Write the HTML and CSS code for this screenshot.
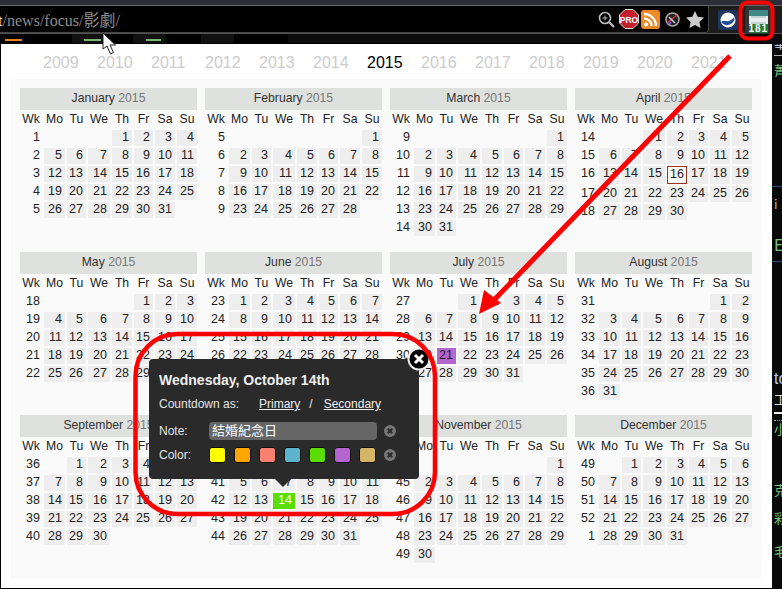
FILE: index.html
```html
<!DOCTYPE html>
<html lang="en">

<head>
    <meta charset="UTF-8">
    <title>Year Calendar</title>
    <link rel="stylesheet" href="styles.css">
</head>

<body>
    <div class="page">
        <div class="tabstrip"></div>
        <header class="toolbar">
            <div class="address">
                <div class="url"><b>ct</b>/news/focus/影劇/</div>
                <svg class="icon-zoom" width="17" height="17" viewBox="0 0 17 17">
                    <circle cx="7" cy="7" r="5.5" fill="none" stroke="#bbb" stroke-width="1.6" />
                    <path d="M11 11l5 5" stroke="#bbb" stroke-width="2.4" />
                    <path d="M4.5 7h5M7 4.5v5" stroke="#bbb" stroke-width="1" />
                </svg>
                <svg class="icon-stop" width="20" height="20" viewBox="0 0 20 20">
                    <path d="M6 .5h8L19.500 6v8L14 19.500H6L.5 14V6z" fill="#c4202c" stroke="#ddd" stroke-width="1" />
                    <text x="10" y="13.500" class="stop-text">PRO</text>
                </svg>
                <svg class="icon-rss" width="19" height="19" viewBox="0 0 19 19">
                    <rect width="19" height="19" rx="3" fill="#f08a24" />
                    <circle cx="5" cy="14.500" r="2" fill="#fff" />
                    <path d="M3 8.500a7.500 7.500 0 0 1 7.500 7.500M3 4a12 12 0 0 1 12 12" fill="none" stroke="#fff" stroke-width="2.400" />
                </svg>
                <svg class="icon-dial" width="15" height="15" viewBox="0 0 15 15">
                    <circle cx="7.500" cy="7.500" r="6.500" fill="#222" stroke="#aaa" stroke-width="1.500" />
                    <path d="M2 11L12 3" stroke="#d8344a" stroke-width="1.500" />
                    <path d="M4 5l6 6" stroke="#ccc" stroke-width="1.500" />
                    <circle cx="5" cy="11" r="1.500" fill="#6c4fd0" />
                </svg>
                <svg class="icon-star" width="18" height="17" viewBox="0 0 18 17">
                    <path d="M9 0l2.700 5.800 6.300.8-4.600 4.300 1.200 6.100L9 14l-5.600 3 1.200-6.100L0 6.600l6.300-.8z" fill="#ccc" />
                </svg>
            </div>
            <svg class="icon-globe" width="20" height="20" viewBox="0 0 20 20">
                <rect width="20" height="20" rx="2" fill="#1f3560" />
                <circle cx="10" cy="10" r="7.500" fill="#fff" />
                <path d="M3 12c3-3 5 0 8-1s4-3 5.500-4a7.500 7.500 0 0 1-13.500 5z" fill="#1f4f95" />
            </svg>
            <div class="ext-button">
                <div class="ext-icon">
                    <div class="ext-top"></div>
                    <div class="ext-lines"></div>
                    <div class="ext-count">181</div>
                </div>
            </div>
        </header>
        <div class="bookmarks">
            <div class="mark mark-first"><i></i></div>
            <div class="mark mark-a"><i></i></div>
            <div class="mark mark-b"><i></i></div>
            <div class="mark mark-c"></div>
            <div class="mark mark-d"></div>
        </div>

        <div class="desk">
            <div class="popup">
                <nav class="years">
                    <span>2009</span><span>2010</span><span>2011</span><span>2012</span><span>2013</span><span>2014</span>
                    <span class="current">2015</span>
                    <span>2016</span><span>2017</span><span>2018</span><span>2019</span><span>2020</span><span>2021</span>
                </nav>
                <main class="panel" id="months"></main>
            </div>
            <aside class="side">
                <div class="s1">華</div>
                <div class="s2">菁</div>
                <div class="s3"></div>
                <div class="s4">i</div>
                <div class="s5">E</div>
                <div class="s6"></div>
                <div class="s7">to</div>
                <div class="s8">工</div>
                <div class="s9">小</div>
                <div class="s10">克</div>
                <div class="s11">彩</div>
                <div class="s12">毛</div>
            </aside>
        </div>

        <div class="tip">
            <h2>Wednesday, October 14th</h2>
            <div class="tip-count">
                <span class="tip-label">Countdown as:</span>
                <a>Primary</a>
                <span class="slash">/</span>
                <a>Secondary</a>
            </div>
            <div class="tip-row tip-note">
                <span class="tip-key">Note:</span>
                <div class="note-input">結婚紀念日</div>
                <svg class="clear" width="12" height="12" viewBox="0 0 13 13">
                    <circle cx="6.500" cy="6.500" r="6.500" fill="#777" />
                    <path d="M4 4l5 5M9 4l-5 5" stroke="#2a2a2a" stroke-width="2.200" />
                </svg>
            </div>
            <div class="tip-row tip-color">
                <span class="tip-key">Color:</span>
                <div class="swatches">
                    <i class="c1"></i><i class="c2"></i><i class="c3"></i><i class="c4"></i><i class="c5"></i><i class="c6"></i><i class="c7"></i>
                </div>
                <svg class="clear" width="12" height="12" viewBox="0 0 13 13">
                    <circle cx="6.500" cy="6.500" r="6.500" fill="#777" />
                    <path d="M4 4l5 5M9 4l-5 5" stroke="#2a2a2a" stroke-width="2.200" />
                </svg>
            </div>
            <div class="tip-arrow"></div>
            <svg class="tip-close" width="24" height="24" viewBox="0 0 24 24">
                <circle cx="12" cy="12" r="10.500" fill="#000" stroke="#eee" stroke-width="2" />
                <path d="M8 8l8 8M16 8l-8 8" stroke="#fff" stroke-width="3" />
            </svg>
        </div>

        <!-- red marks drawn on top of the screenshot -->
        <svg class="marks" width="782" height="589" viewBox="0 0 782 589">
            <rect x="135.500" y="334" width="299.500" height="180" rx="42" fill="none" stroke="#f00" stroke-width="4.500" />
            <rect x="740.500" y="2.500" width="32" height="36" rx="7" fill="none" stroke="#f00" stroke-width="4" />
            <path d="M730 56L495 299" stroke="#f00" stroke-width="5" />
            <path d="M479 314L484 290L501 303z" fill="#f00" />
            <path d="M103 33v16l4-3 3.500 8 3-1.500-3.500-7.500h5.500z" fill="#fff" stroke="#222" stroke-width="1" />
        </svg>
    </div>
    <script src="calendar.js"></script>
</body>

</html>
```

FILE: styles.css
```css
* {
    margin: 0;
    padding: 0;
    box-sizing: border-box;
}

body {
    background-color: #000;
    font-family: "Liberation Sans", Arial, sans-serif;
    overflow: hidden;
}

.page {
    position: relative;
    width: 782px;
    height: 589px;
    overflow: hidden;
}

.tabstrip {
    height: 6px;
    background-color: #2b2e36;
    border-bottom: 1px solid #666;
}

.toolbar {
    display: flex;
    align-items: center;
    height: 28px;
    border-bottom: 1px solid #555;
    background-color: #1c1c1c;
}

.address {
    display: flex;
    align-items: center;
    width: 709px;
    height: 27px;
    background-color: #000;
    border-right: 1px solid #444;
    border-bottom: 1px solid #444;
    border-radius: 0 0 4px 0;
    overflow: hidden;
}

.url {
    flex: 1;
    margin-left: -9px;
    font-family: "Liberation Serif", "Noto Sans CJK TC", serif;
    font-size: 16px;
    color: #8c8c8c;
    white-space: nowrap;
}

.url b {
    font-weight: normal;
    color: #eee;
}

.address svg {
    flex: none;
}

.icon-zoom {
    margin-right: 4px;
}

.icon-stop {
    margin-right: 2px;
}

.stop-text {
    font-size: 8.500px;
    font-weight: bold;
    fill: #fff;
    text-anchor: middle;
}

.icon-rss {
    margin-right: 5px;
}

.icon-dial {
    margin-right: 6px;
}

.icon-star {
    margin-right: 4px;
}

.icon-globe {
    margin-left: 9px;
}

.ext-button {
    display: flex;
    justify-content: center;
    width: 26px;
    height: 30px;
    margin: 3px 0 0 7px;
    padding-top: 4px;
    background-color: #333;
    border-radius: 4px;
    flex: none;
}

.ext-icon {
    width: 19px;
    height: 23px;
    background-color: #e8eeee;
}

.ext-top {
    height: 6px;
    background-color: #3f8a86;
}

.ext-lines {
    height: 8px;
    margin: 0 2px;
    border-top: 2px solid #c4d2d2;
    border-bottom: 2px solid #c4d2d2;
    margin-top: 0;
}

.ext-count {
    height: 9px;
    background-color: #1e7a36;
    color: #fff;
    font-size: 10px;
    font-weight: bold;
    letter-spacing: 1px;
    line-height: 9px;
    text-align: center;
}

.bookmarks {
    display: flex;
    height: 10px;
    background-color: #000;
}

.mark {
    position: relative;
    height: 9px;
    background-color: #111;
}

.mark i {
    position: absolute;
    left: 0;
    right: 0;
    top: 5px;
    height: 2px;
}

.mark-first {
    width: 72px;
    background-color: #000;
}

.mark-first i {
    left: 5px;
    right: 50px;
    background-color: #e8821e;
}

.mark-a {
    width: 32px;
}

.mark-a i {
    left: 12px;
    right: 3px;
    background-color: #7ab87a;
}

.mark-b {
    width: 33px;
    margin-left: 29px;
}

.mark-b i {
    left: 13px;
    right: 5px;
    background-color: #7ab87a;
}

.mark-c {
    width: 33px;
    margin-left: 35px;
}

.mark-d {
    flex: 1;
    margin-left: 54px;
    background-color: #0c0c0c;
}

.desk {
    display: flex;
    height: 545px;
    padding-left: 1px;
}

.popup {
    width: 771px;
    height: 544px;
    background-color: #fff;
}

.years {
    display: flex;
    height: 35px;
    padding: 10px 0 0 42px;
    font-size: 16px;
    line-height: 18px;
    color: #ccc;
}

.years span {
    width: 54px;
    flex: none;
}

.years .current {
    color: #000;
}

.panel {
    display: grid;
    grid-template-columns: repeat(4, 177px);
    grid-template-rows: 149px 148px auto;
    gap: 15px 8px;
    width: 750px;
    height: 500px;
    margin-left: 10px;
    padding: 9px;
    background-color: #fafafa;
}

.month-title {
    height: 22px;
    margin-bottom: 0;
    background-color: #dee1de;
    font-size: 12.200px;
    font-weight: normal;
    line-height: 21px;
    text-align: center;
    color: #333;
}

.month-title span {
    color: #777;
}

.week-head {
    display: grid;
    grid-template-columns: 22px 21px 19px 22px 20px 19px 20px 20px;
    column-gap: 2px;
    height: 20px;
    font-size: 12.200px;
    line-height: 19px;
    text-align: center;
    color: #222;
}

.days {
    display: grid;
    grid-template-columns: 22px 21px 19px 22px 20px 19px 20px 20px;
    gap: 2px;
    font-size: 12.500px;
    line-height: 15px;
    text-align: right;
    color: #222;
}

.days div {
    min-height: 16px;
    padding-right: 3px;
}

.days .day {
    background-color: #eee;
}

.days .wk {
    padding-right: 2px;
}

.days .today {
    min-height: 18px;
    background-color: transparent;
    border: 1px solid #a0341c;
    padding-right: 2px;
}

.days .purple {
    background-color: #b565d0;
}

.days .green {
    background-color: #5add00;
    color: #fff;
}

.side {
    flex: 1;
    overflow: hidden;
    padding-left: 2px;
    font-family: "Noto Sans CJK TC", sans-serif;
    font-size: 13px;
    line-height: 16px;
    color: #7bc47b;
    background-color: #0a0a0a;
}

.side div {
    white-space: nowrap;
}

.s1 {
    height: 21px;
    margin-top: -9px;
    color: #c8d8f0;
    border-bottom: 1px solid #aaa;
}

.s2 {
    margin-top: 6px;
}

.s3 {
    height: 1px;
    margin: 108px 0 0 -2px;
    background-color: #2a4a78;
}

.s4 {
    margin-top: 9px;
    height: 38px;
    color: #b8b860;
}

.s5 {
    height: 24px;
    font-size: 16px;
    line-height: 20px;
}

.s6 {
    height: 1px;
    margin: 3px 0 0 -2px;
    background-color: #2a4a78;
}

.s7 {
    margin-top: 109px;
    height: 14px;
    font-family: "Liberation Sans", sans-serif;
    font-size: 16px;
    color: #b8d4f0;
}

.s8 {
    margin-top: 6px;
    height: 23px;
    color: #ddd;
    border-bottom: 2px solid #eee;
}

.s9 {
    margin-top: 6px;
    height: 62px;
    border-top: 1px dotted #aaa;
}

.s10 {
    height: 28px;
}

.s11 {
    height: 33px;
}

.s12 {
    height: 20px;
}

.tip {
    position: absolute;
    left: 149px;
    top: 359px;
    width: 270px;
    height: 120px;
    padding: 13px 10px 0;
    background-color: #2a2a2a;
    border-radius: 4px;
    color: #e4e4e4;
    font-size: 12px;
}

.tip h2 {
    font-size: 14px;
    line-height: 17px;
    color: #eee;
}

.tip-count {
    display: flex;
    align-items: center;
    margin-top: 7px;
    height: 16px;
}

.tip-label {
    width: 100px;
}

.tip-count a {
    color: #eee;
    text-decoration: underline;
}

.slash {
    margin: 0 11px 0 9px;
}

.tip-row {
    display: flex;
    align-items: center;
    margin-top: 7px;
    height: 18px;
}

.tip-note {
    margin-top: 10px;
}

.tip-color {
    margin-top: 6px;
}

.tip-key {
    width: 50px;
    flex: none;
}

.note-input {
    width: 168px;
    height: 18px;
    padding-left: 3px;
    background-color: #666;
    border-radius: 4px;
    font-family: "Noto Sans CJK TC", sans-serif;
    font-size: 13px;
    line-height: 15px;
    color: #fff;
}

.clear {
    margin-left: 7px;
    flex: none;
}

.swatches {
    display: flex;
    width: 168px;
    gap: 8px;
}

.swatches i {
    width: 17px;
    height: 16px;
    border: 1px solid #111;
    border-radius: 3px;
}

.c1 { background-color: #ffff00; }
.c2 { background-color: #ffa500; }
.c3 { background-color: #fa8072; }
.c4 { background-color: #5cb3cc; }
.c5 { background-color: #5add00; }
.c6 { background-color: #b565d0; }
.c7 { background-color: #d4b566; }

.tip-arrow {
    position: absolute;
    left: 126px;
    top: 120px;
    border-left: 8px solid transparent;
    border-right: 8px solid transparent;
    border-top: 8px solid #2a2a2a;
}

.tip-close {
    position: absolute;
    left: 258px;
    top: -12px;
}

.marks {
    position: absolute;
    left: 0;
    top: 0;
}
```

FILE: calendar.js
```js
const MONTHS = ['January', 'February', 'March', 'April', 'May', 'June', 'July',
    'August', 'September', 'October', 'November', 'December'];
const HEAD = ['Wk', 'Mo', 'Tu', 'We', 'Th', 'Fr', 'Sa', 'Su'];
const MARKED = { '3-16': 'today', '6-21': 'purple', '9-14': 'green' };

// week 1 of the year starts on monday Dec 29 2014
const FIRST_MONDAY = Date.UTC(2014, 11, 29);
const DAY_MS = 86400000;

function weekNumber(time) {
    const week = Math.floor((time - FIRST_MONDAY) / DAY_MS / 7) + 1;
    return week > 52 ? week - 52 : week;
}

function addCell(parent, text, className) {
    const cell = document.createElement('div');
    cell.textContent = text;
    if (className) cell.className = className;
    parent.appendChild(cell);
}

const panel = document.getElementById('months');

MONTHS.forEach((name, m) => {
    const month = document.createElement('section');
    const title = document.createElement('h3');
    title.className = 'month-title';
    title.innerHTML = name + ' <span>2015</span>';
    month.appendChild(title);

    const head = document.createElement('div');
    head.className = 'week-head';
    HEAD.forEach((h) => addCell(head, h));
    month.appendChild(head);

    const days = document.createElement('div');
    days.className = 'days';
    const total = new Date(Date.UTC(2015, m + 1, 0)).getUTCDate();
    const offset = (new Date(Date.UTC(2015, m, 1)).getUTCDay() + 6) % 7;

    addCell(days, weekNumber(Date.UTC(2015, m, 1)), 'wk');
    for (let i = 0; i < offset; i++) addCell(days, '');

    for (let d = 1; d <= total; d++) {
        const time = Date.UTC(2015, m, d);
        if (d > 1 && (d - 1 + offset) % 7 === 0) addCell(days, weekNumber(time), 'wk');
        const mark = MARKED[m + '-' + d];
        addCell(days, d, mark ? 'day ' + mark : 'day');
    }

    month.appendChild(days);
    panel.appendChild(month);
});
```
